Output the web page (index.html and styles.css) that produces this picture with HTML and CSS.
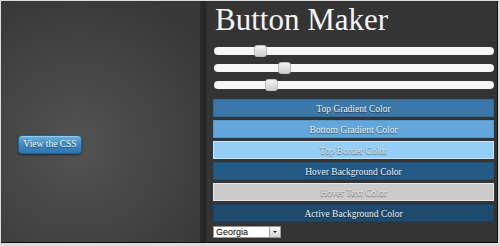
FILE: index.html
```html
<!DOCTYPE html>
<html lang="en">
<head>
  <meta charset="UTF-8">
  <title>Button Maker</title>
  <link rel="stylesheet" href="styles.css">
</head>
<body>
  <div class="frame">
    <!-- Preview -->
    <div class="preview">
      <button class="css-button">View the CSS</button>
    </div>
    <div class="divider"></div>

    <!-- Controls -->
    <div class="controls">
      <h1>Button Maker</h1>

      <div class="sliders">
        <input type="range" id="radius" min="0" max="100" value="15">
        <input type="range" id="padding" min="0" max="100" value="24">
        <input type="range" id="fontSize" min="0" max="100" value="19">
      </div>

      <div class="swatches">
        <div class="swatch top-gradient">Top Gradient Color</div>
        <div class="swatch bottom-gradient">Bottom Gradient Color</div>
        <div class="swatch top-border">Top Border Color</div>
        <div class="swatch hover-bg">Hover Background Color</div>
        <div class="swatch hover-text">Hover Text Color</div>
        <div class="swatch active-bg">Active Background Color</div>
      </div>

      <div class="font-picker">
        <select id="fontFamily">
          <option>Georgia</option>
          <option>Arial</option>
          <option>Verdana</option>
        </select>
        <span class="arrow"></span>
      </div>
    </div>
  </div>
</body>
</html>
```

FILE: styles.css
```css
body {
  margin: 0;
  background: #dcdcdc;
  font-family: "Liberation Serif", serif;
}

.frame {
  display: flex;
  width: 496px;
  height: 241px;
  margin: 1px 0 0 1px;
  border-right: 1px solid #111;
  border-bottom: 1px solid #111;
  background: #343434;
}

.preview {
  width: 199px;
  padding: 132px 0 0 17px;
  box-sizing: border-box;
  background: radial-gradient(circle at 38% 60%, #535353 0%, #444 45%, #383838 85%);
}

.divider {
  width: 7px;
  background: linear-gradient(to right, #2c2c2c, #262626 60%, #303030);
}

.css-button {
  width: 64px;
  height: 19px;
  padding: 0;
  font-family: "Liberation Serif", serif;
  font-size: 9.5px;
  color: #fff;
  text-shadow: 0 1px 1px rgba(0,0,0,0.5);
  background: linear-gradient(to bottom, #6cb4e4, #3b86c1 55%, #2f76ae);
  border: 1px solid #25608f;
  border-radius: 4px;
  box-shadow: 0 1px 2px rgba(0,0,0,0.5), inset 0 1px 0 rgba(255,255,255,0.3);
  cursor: pointer;
}

.controls {
  flex: 1;
  padding: 4px 3px 0 6px;
}

h1 {
  margin: 0 0 0 2px;
  font-family: "Liberation Serif", serif;
  font-weight: normal;
  font-size: 31px;
  line-height: 30px;
  color: #f4f4f4;
}

.sliders {
  display: flex;
  flex-direction: column;
  gap: 9px;
  padding: 12px 0 10px 1px;
}

input[type=range] {
  -webkit-appearance: none;
  appearance: none;
  display: block;
  width: 280px;
  height: 8px;
  margin: 0;
  background: #f6f6f6;
  border-radius: 4px;
  outline: none;
}

input[type=range]::-webkit-slider-thumb {
  -webkit-appearance: none;
  width: 13px;
  height: 12px;
  background: linear-gradient(to bottom, #f2f2f2, #cfcfcf);
  border: 1px solid #bdbdbd;
  border-radius: 3px;
  box-sizing: border-box;
}

.swatches {
  display: flex;
  flex-direction: column;
  gap: 3px;
}

.swatch {
  height: 18px;
  line-height: 18px;
  box-sizing: border-box;
  text-align: center;
  font-size: 9.5px;
  color: #eef2f5;
  text-shadow: 0 1px 1px rgba(0,0,0,0.55);
  cursor: pointer;
}

.top-gradient { background: #3b77a8; border: 1px solid #336a96; }
.bottom-gradient { background: #62a6da; border: 1px solid #5897c8; }
.top-border { background: #94cdf5; border: 1px solid #c9e7fb; color: #dde6ec; }
.hover-bg { background: #245a86; border: 1px solid #215179; }
.hover-text { background: #cbcbcb; border: 1px solid #e8e8e8; color: #e4e4e4; }
.active-bg { background: #1e4a6d; border: 1px solid #1b4262; }

.font-picker {
  display: flex;
  width: 68px;
  height: 12px;
  margin-top: 4px;
  background: #fff;
  border: 1px solid #9a9a9a;
  box-sizing: border-box;
}

select {
  -webkit-appearance: none;
  appearance: none;
  flex: 1;
  min-width: 0;
  height: 10px;
  padding: 0 0 0 2px;
  border: none;
  background: #fff;
  font-family: "Liberation Sans", Arial, sans-serif;
  font-size: 9px;
  line-height: 10px;
  color: #000;
  outline: none;
}

.arrow {
  position: relative;
  width: 10px;
  background: linear-gradient(to bottom, #f4f4f4, #d6d6d6);
  border-left: 1px solid #a8a8a8;
}

.arrow::after {
  content: "";
  position: absolute;
  left: 3px;
  top: 4px;
  border-left: 2px solid transparent;
  border-right: 2px solid transparent;
  border-top: 2px solid #222;
}
```
